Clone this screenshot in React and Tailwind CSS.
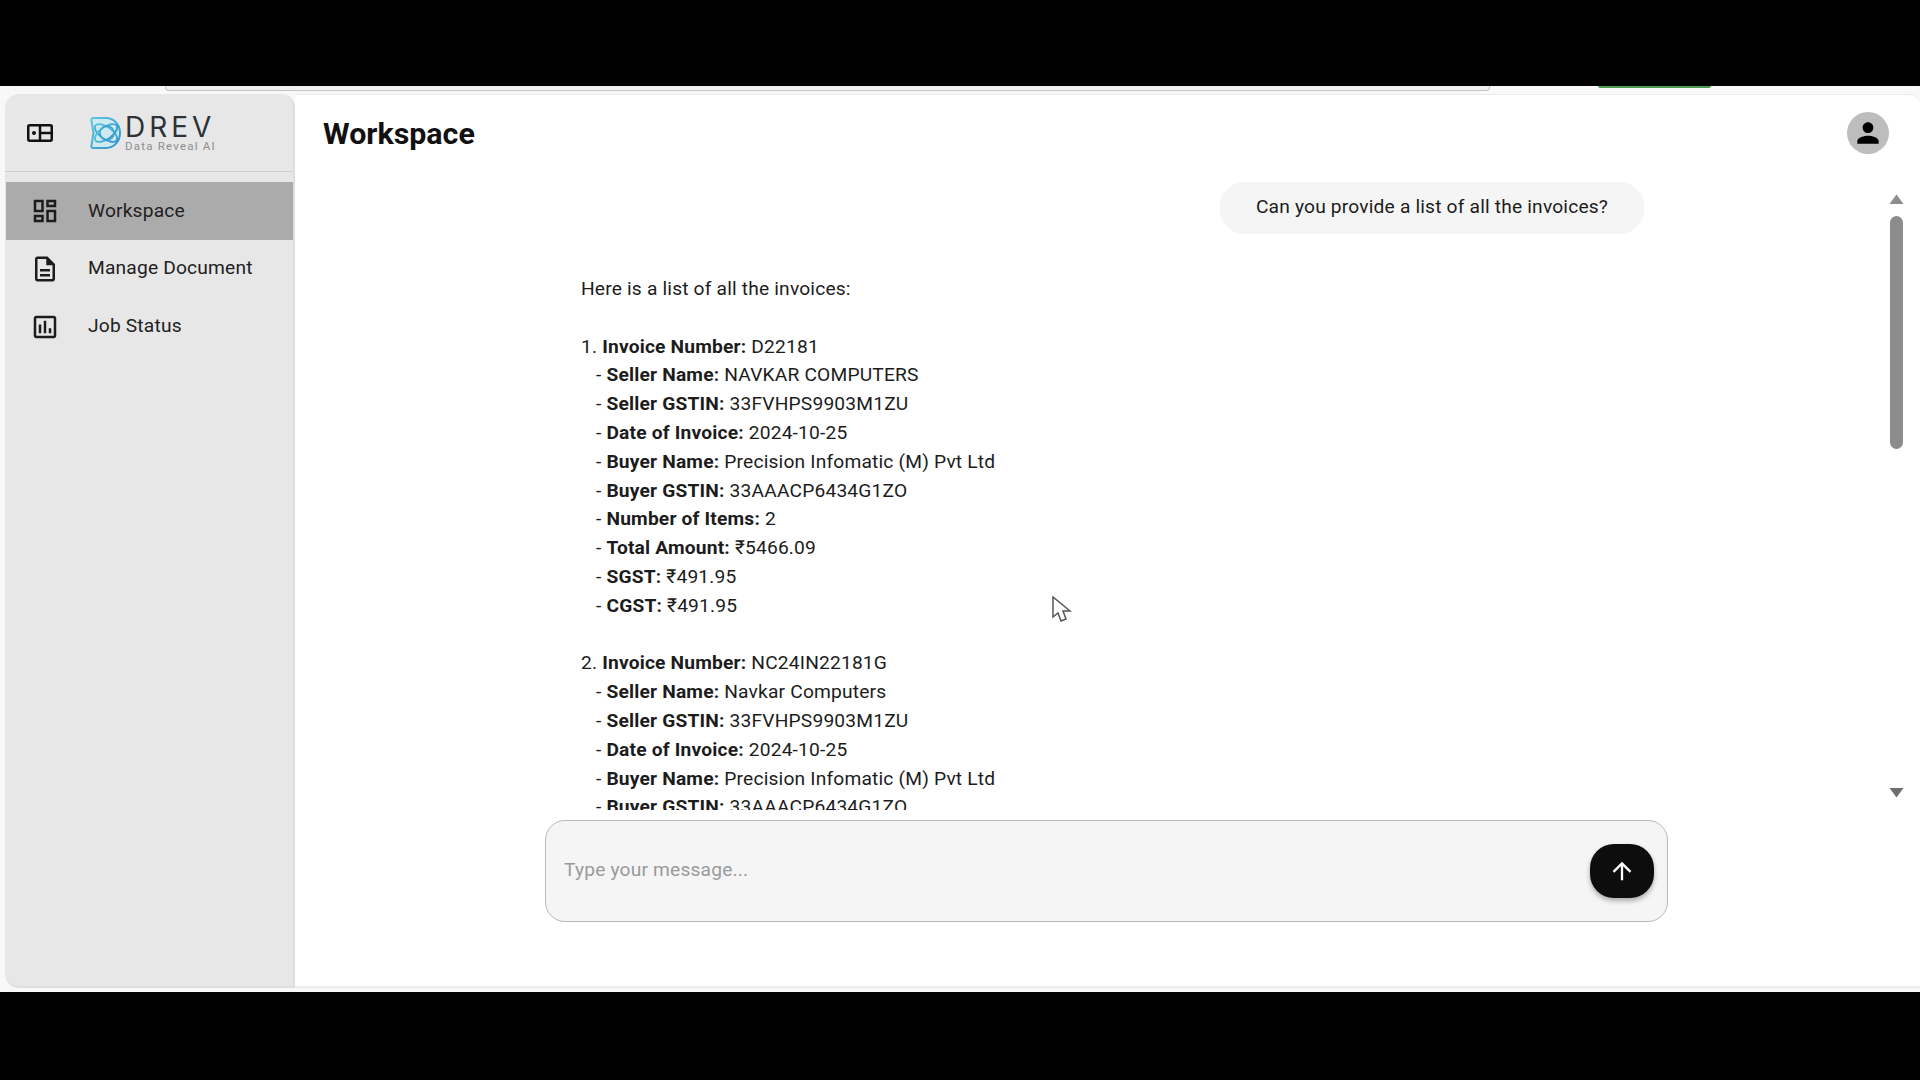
const F = "font-['Roboto',sans-serif]";

function Field({ label, value }) {
  return (
    <div className="pl-[15px]">
      - <b className="font-bold">{label}:</b> {value}
    </div>
  );
}

function Invoice({ n, number, seller, total, sgst, cgst, partial }) {
  return (
    <div>
      <div>
        {n}. <b className="font-bold">Invoice Number:</b> {number}
      </div>
      <Field label="Seller Name" value={seller} />
      <Field label="Seller GSTIN" value="33FVHPS9903M1ZU" />
      <Field label="Date of Invoice" value="2024-10-25" />
      <Field label="Buyer Name" value="Precision Infomatic (M) Pvt Ltd" />
      <Field label="Buyer GSTIN" value="33AAACP6434G1ZO" />
      {!partial && (
        <>
          <Field label="Number of Items" value="2" />
          <Field label="Total Amount" value={total} />
          <Field label="SGST" value={sgst} />
          <Field label="CGST" value={cgst} />
        </>
      )}
    </div>
  );
}

function NavItem({ d, label, active }) {
  return (
    <div className={`flex h-[58px] items-center ${active ? "bg-[#ababab]" : ""}`}>
      <svg viewBox="0 0 24 24" className="ml-[24px] h-[30px] w-[30px] fill-[#1c1c1c]">
        <path d={d} />
      </svg>
      <span className={`ml-[28px] text-[19.200px] tracking-[0.180px] text-[#212121] ${active ? "" : "mb-[2px]"}`}>{label}</span>
    </div>
  );
}

function Logo() {
  return (
    <div className="ml-[37px] flex items-center">
      <svg viewBox="0 0 32 34" className="h-[34px] w-[32px]" fill="none">
        <defs>
          <linearGradient id="lg" x1="0" y1="0" x2="1" y2="1">
            <stop offset="0" stopColor="#5cc8dc" />
            <stop offset="1" stopColor="#2f8fd0" />
          </linearGradient>
        </defs>
        <path d="M3 2h13c8 0 14 6.500 14 15s-6 15-14 15H3c-1 0-2-1-1.500-3 1-4 1-8 2-12-1-4-1-8-2-12C1 3 2 2 3 2z" fill="#cfe9f0" stroke="url(#lg)" strokeWidth="2" />
        <ellipse cx="16" cy="17" rx="13" ry="6" transform="rotate(35 16 17)" stroke="url(#lg)" strokeWidth="1.800" />
        <ellipse cx="16" cy="17" rx="13" ry="6" transform="rotate(-35 16 17)" stroke="url(#lg)" strokeWidth="1.800" />
        <circle cx="17" cy="17" r="7" stroke="#3aa2d6" strokeWidth="1.500" />
      </svg>
      <div className="mt-[2px] ml-[3px] flex w-[96px] flex-col">
        <span className="font-['Inter',sans-serif] text-[28px] leading-[24px] font-normal tracking-[4px] text-[#2d3238]">DREV</span>
        <span className="mt-[1px] text-[11.500px] leading-[12px] tracking-[1.200px] text-[#8b8f92]">Data Reveal AI</span>
      </div>
    </div>
  );
}

export default function App() {
  return (
    <div className={`relative flex h-screen flex-col overflow-hidden bg-black ${F}`}>
      <div className="h-[86px] shrink-0 bg-black" />
      <div className="flex h-[906px] shrink-0 flex-col bg-[#f8f8f8]">
        <div className="flex h-[8px] shrink-0">
          <div className="ml-[165px] h-[5px] w-[1325px] rounded-b-[4px] border-x border-b border-[#c4c4c4] bg-[#f0f0f0]" />
          <div className="ml-[108px] h-[2px] w-[113px] rounded-b-[4px] bg-[#4d9a53]" />
        </div>
        <div className="ml-[5px] flex h-[894px] shrink-0">
          <aside className="flex w-[290px] shrink-0 flex-col rounded-t-[14px] rounded-bl-[14px] border-r-2 border-b-2 border-[#dedede] bg-[#e7e7e7]">
            <div className="flex h-[78px] shrink-0 items-center border-b border-[#cfcfcf] pl-[22px]">
              <svg viewBox="0 0 26 18" className="h-[18px] w-[26px]" fill="none">
                <rect x="1.250" y="1.250" width="23.500" height="15.500" rx="1.500" stroke="#111" strokeWidth="2.500" />
                <path d="M13 1v16M13 9h12" stroke="#111" strokeWidth="2.500" />
                <circle cx="7" cy="9" r="2" fill="#111" />
              </svg>
              <Logo />
            </div>
            <nav className="mt-[10px] ml-[1px]">
              <NavItem active label="Workspace" d="M19 5v2h-4V5h4M9 5v6H5V5h4m10 8v6h-4v-6h4M9 17v2H5v-2h4M21 3h-8v6h8V3zM11 3H3v10h8V3zm10 8h-8v10h8V11zm-10 4H3v6h8v-6z" />
              <NavItem label="Manage Document" d="M8 16h8v2H8zm0-4h8v2H8zm6-10H6c-1.100 0-2 .9-2 2v16c0 1.100.89 2 1.990 2H18c1.100 0 2-.9 2-2V8l-6-6zm4 18H6V4h7v5h5v11z" />
              <NavItem label="Job Status" d="M19 3H5c-1.100 0-2 .9-2 2v14c0 1.100.9 2 2 2h14c1.100 0 2-.9 2-2V5c0-1.100-.9-2-2-2zm0 16H5V5h14v14zM7 10h2v7H7zm4-3h2v10h-2zm4 6h2v4h-2z" />
            </nav>
          </aside>
          <main className="flex min-w-0 flex-1 flex-col rounded-tr-[10px] border-t border-b-2 border-[#ececec] bg-white">
            <header className="flex h-[77px] shrink-0 items-center justify-between pr-[31px] pl-[28px]">
              <h1 className="text-[30.400px] font-bold text-[#111]">Workspace</h1>
              <div className="mb-[2px] flex h-[42px] w-[42px] items-center justify-center rounded-full bg-[#bdbdbd]">
                <svg viewBox="0 0 24 24" className="h-[32px] w-[32px] fill-black">
                  <path d="M12 12c2.210 0 4-1.790 4-4s-1.790-4-4-4-4 1.790-4 4 1.790 4 4 4zm0 2c-2.670 0-8 1.340-8 4v2h16v-2c0-2.660-5.330-4-8-4z" />
                </svg>
              </div>
            </header>
            <div className="flex h-[638px] shrink-0">
              <div className="min-w-0 flex-1 overflow-hidden text-[19.200px] leading-[28.800px] tracking-[0.180px] text-[#1c1c1c]">
                <div className="mt-[10px] mr-[245px] flex justify-end">
                  <div className="flex h-[52px] w-[424px] items-center justify-center rounded-[24px] bg-[#f5f5f5] pb-[2px]">Can you provide a list of all the invoices?</div>
                </div>
                <div className="mt-[41px] ml-[286px] whitespace-nowrap">
                  <div>Here is a list of all the invoices:</div>
                  <div className="h-[28.800px]" />
                  <Invoice n={1} number="D22181" seller="NAVKAR COMPUTERS" total="₹5466.09" sgst="₹491.95" cgst="₹491.95" />
                  <div className="h-[28.800px]" />
                  <Invoice n={2} number="NC24IN22181G" seller="Navkar Computers" partial />
                </div>
              </div>
              <div className="mr-[16px] flex w-[15px] shrink-0 flex-col items-center pt-[22px]">
                <svg viewBox="0 0 15 10" className="h-[10px] w-[15px] fill-[#8c8c8c]"><path d="M7.500 0.500L14.500 10H0.500z" /></svg>
                <div className="mt-[12px] h-[233px] w-[13px] rounded-full bg-[#8c8c8c]" />
                <svg viewBox="0 0 15 10" className="mt-[339px] h-[10px] w-[15px] fill-[#6f6f6f]"><path d="M0.500 0h14L7.500 9.500z" /></svg>
              </div>
            </div>
            <div className="mt-[10px] ml-[250px] flex h-[102px] w-[1123px] shrink-0 items-center justify-between rounded-[20px] border border-[#b9b9b9] bg-[#f5f5f5] pr-[13px] pl-[18px]">
              <span className="mb-[2px] text-[19.200px] tracking-[0.180px] text-[#9a9a9a]">Type your message...</span>
              <div className="flex h-[54px] w-[64px] items-center justify-center rounded-[24px] bg-[#0d0d0d] shadow-[0_3px_5px_rgba(0,0,0,0.3)]">
                <svg viewBox="0 0 24 24" className="h-[28px] w-[28px] fill-white">
                  <path d="M4 12l1.410 1.410L11 7.830V20h2V7.830l5.580 5.590L20 12l-8-8-8 8z" />
                </svg>
              </div>
            </div>
          </main>
        </div>
      </div>
      <div className="flex-1 bg-black" />
      <svg viewBox="0 0 20 28" className="absolute top-[596px] left-[1052px] h-[28px] w-[20px]" fill="#fff" stroke="#555" strokeWidth="1.500">
        <path d="M1 1v20l5-4 3 8 5-2-3-8h7z" />
      </svg>
    </div>
  );
}
